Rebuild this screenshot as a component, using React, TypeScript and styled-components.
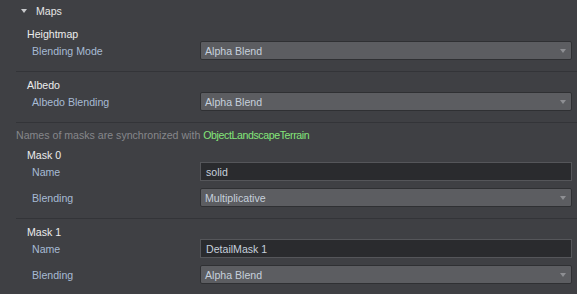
import styled, { createGlobalStyle } from "styled-components";

const GlobalStyle = createGlobalStyle`
    html, body {
        margin: 0;
        padding: 0;
        background-color: #3f4044;
    }
    body {
        font-family: "Liberation Sans", Arial, sans-serif;
        font-size: 10.6px;
    }
`;

const Panel = styled.div`
    width: 577px;
    height: 294px;
    overflow: hidden;
    background-color: #3f4044;
`;

const Header = styled.div`
    height: 21px;
    display: flex;
    align-items: center;
    padding-left: 21px;
    gap: 9px;
    color: #e6e6e6;
`;

const Caret = styled.span`
    width: 0;
    height: 0;
    border-left: 3.5px solid transparent;
    border-right: 3.5px solid transparent;
    border-top: 4px solid #c8c9cc;
    margin-top: 1px;
`;

const Group = styled.div<{ $last?: boolean }>`
    margin-left: 16px;
    padding: 6px 0 11px 0;
    border-bottom: 1px solid ${(props) => (props.$last ? "transparent" : "#333438")};
    display: flex;
    flex-direction: column;
    gap: 7px;
`;

const GroupTitle = styled.div`
    height: 14px;
    line-height: 14px;
    padding-left: 11px;
    margin-bottom: -7px;
    color: #ececec;
`;

const Row = styled.div`
    height: 19px;
    display: flex;
    align-items: center;
`;

const Label = styled.div`
    width: 168px;
    padding-left: 16px;
    color: #a7bbd4;
`;

const Select = styled.div`
    width: 372px;
    height: 19px;
    box-sizing: border-box;
    display: flex;
    align-items: center;
    justify-content: space-between;
    padding: 0 5px 0 4px;
    background-color: #5c5d61;
    border: 1px solid #2f3033;
    border-radius: 2px;
    color: #c6d0dc;
`;

const Arrow = styled.span`
    width: 0;
    height: 0;
    border-left: 3.5px solid transparent;
    border-right: 3.5px solid transparent;
    border-top: 4px solid #8e8f93;
`;

const TextInput = styled.div`
    width: 372px;
    height: 19px;
    box-sizing: border-box;
    display: flex;
    align-items: center;
    padding-left: 5px;
    background-color: #2a2b2e;
    border: 1px solid #55565a;
    color: #c6d0dc;
`;

const Note = styled.div`
    height: 14px;
    line-height: 14px;
    padding: 5px 0 0 16px;
    color: #86878b;
`;

const Link = styled.span`
    color: #84e57a;
    letter-spacing: -0.4px;
`;

function Dropdown({ value }: { value: string }) {
    return (
        <Select>
            <span>{value}</span>
            <Arrow />
        </Select>
    );
}

const masks = [
    { name: "solid", blending: "Multiplicative" },
    { name: "DetailMask 1", blending: "Alpha Blend" },
];

export default function App() {
    return (
        <Panel>
            <GlobalStyle />
            <Header>
                <Caret />
                <span>Maps</span>
            </Header>
            <Group>
                <GroupTitle>Heightmap</GroupTitle>
                <Row>
                    <Label>Blending Mode</Label>
                    <Dropdown value="Alpha Blend" />
                </Row>
            </Group>
            <Group>
                <GroupTitle>Albedo</GroupTitle>
                <Row>
                    <Label>Albedo Blending</Label>
                    <Dropdown value="Alpha Blend" />
                </Row>
            </Group>
            <Note>
                Names of masks are synchronized with <Link>ObjectLandscapeTerrain</Link>
            </Note>
            {masks.map((mask, i) => (
                <Group key={i} $last={i === masks.length - 1}>
                    <GroupTitle>Mask {i}</GroupTitle>
                    <Row>
                        <Label>Name</Label>
                        <TextInput>{mask.name}</TextInput>
                    </Row>
                    <Row>
                        <Label>Blending</Label>
                        <Dropdown value={mask.blending} />
                    </Row>
                </Group>
            ))}
        </Panel>
    );
}
